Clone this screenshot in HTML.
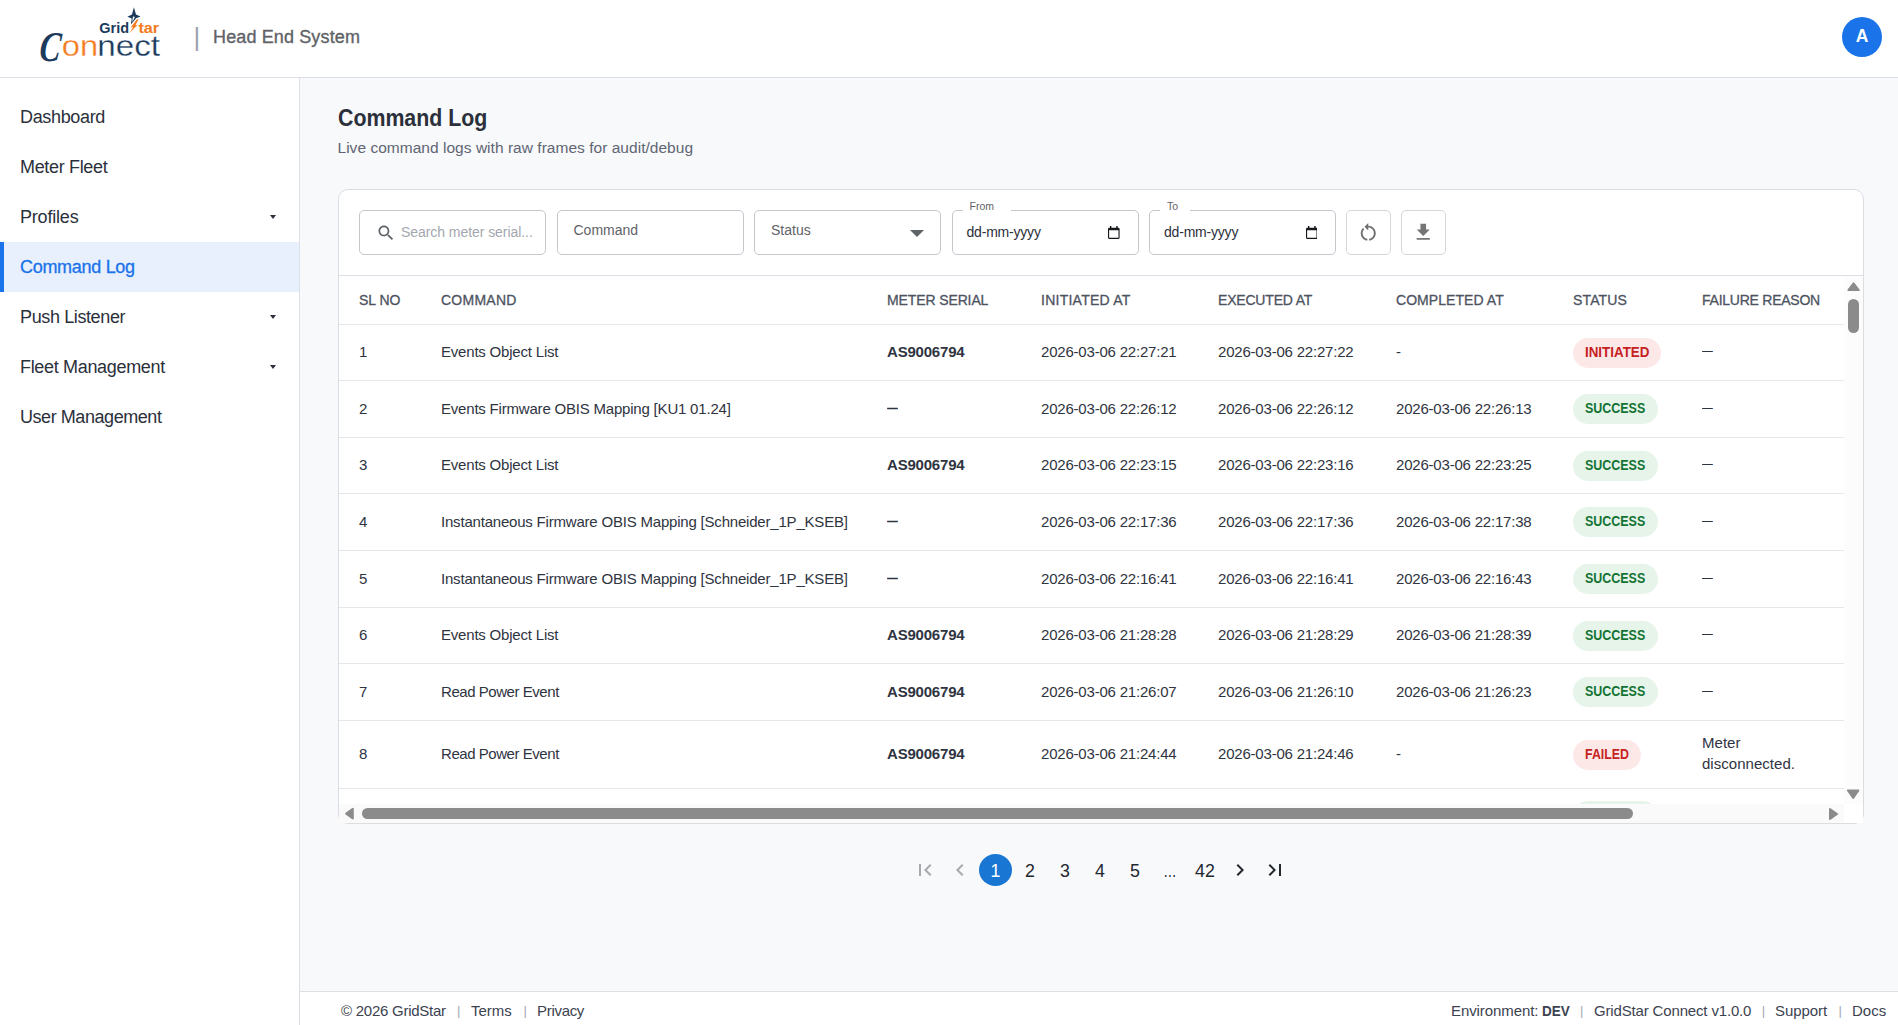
<!DOCTYPE html>
<html lang="en">
<head>
<meta charset="utf-8">
<title>Command Log - GridStar Connect</title>
<style>
*{box-sizing:border-box;margin:0;padding:0}
html,body{width:1898px;height:1025px;overflow:hidden;background:#f8f9fb;font-family:"Liberation Sans",sans-serif;color:#2f3441}
.abs{position:absolute}
#hdr{position:absolute;left:0;top:0;width:1898px;height:78px;background:#fff;border-bottom:1px solid #dcdfe5}
#side{position:absolute;left:0;top:78px;width:300px;height:947px;background:#fff;border-right:1px solid #dcdfe5}
.nav{position:absolute;left:0;width:299px;height:50px;line-height:50px;padding-left:20px;font-size:18px;color:#2b303b;letter-spacing:-0.15px}
.nav.act{background:#e8f0fe;color:#1a73e8;-webkit-text-stroke:0.3px #1a73e8;border-left:4px solid #1a73e8;padding-left:16px}
.nav i{position:absolute;left:269.600px;top:22.800px;width:0;height:0;border-left:3.200px solid transparent;border-right:3.200px solid transparent;border-top:4.400px solid #2b303b}
.nav.act i{left:266px}
#ttl{left:338px;top:103px;font-size:23px;font-weight:700;transform-origin:0 50%;transform:scaleX(0.9275);color:#2b303b;line-height:30px;white-space:nowrap}
#sub{left:337.500px;top:137.500px;font-size:15.5px;letter-spacing:0.03px;color:#5f6573;line-height:20px;white-space:nowrap}
#card{left:338px;top:189px;width:1526px;height:635px;background:#fff;border:1px solid #dadde2;border-radius:10px}
.fld{position:absolute;top:20px;height:45px;border:1px solid #c4c7cc;border-radius:5px;background:#fff;font-size:14px;color:#5f6573}
#ftr{left:300px;top:991px;width:1598px;height:34px;background:#fff;border-top:1px solid #dcdfe5;font-size:15px;color:#3c4250}

#hsep{left:193.4px;top:22px;font-size:25.8px;line-height:30px;color:#9aa0ae}
#hes{left:213px;top:24px;font-size:18px;letter-spacing:0.13px;line-height:26px;color:#5f6368;-webkit-text-stroke:0.35px #5f6368;white-space:nowrap}
#ava{left:1842px;top:17px;width:40px;height:40px;border-radius:50%;background:#1a73e8;color:#fff;font-weight:700;font-size:17.5px;line-height:39px;text-align:center}

.ph{position:absolute;top:0;line-height:43px;color:#a3a7ae;font-size:14px;letter-spacing:-0.06px;white-space:nowrap}
.lb{position:absolute;top:0;line-height:38px;color:#5f6368;font-size:14px;white-space:nowrap}
.dt{position:absolute;top:0;line-height:43px;color:#2b303b;font-size:14px;letter-spacing:-0.2px;white-space:nowrap}
.sl{position:absolute;top:-11px;line-height:12px;color:#5f6368;font-size:10.5px;white-space:nowrap}
.notch{position:absolute;top:-1px;height:1px;background:#fff}
.dd{position:absolute;left:155.200px;top:18.800px;width:0;height:0;border-left:7.100px solid transparent;border-right:7.100px solid transparent;border-top:7.100px solid #5f6368}
.fld.btn{border-color:#d3d6db}
#fdiv{position:absolute;left:0;top:85px;width:1524px;height:1px;background:#dcdfe5}
#tbl{position:absolute;left:0;top:0;width:1505px;height:614px;overflow:hidden}
.row{position:absolute;left:0;width:1505px;border-bottom:1px solid #e5e7eb;font-size:15px;color:#2f3441;letter-spacing:-0.2px}
.row.th{font-size:14px;color:#4d5361;-webkit-text-stroke:0.3px #4d5361;letter-spacing:0.1px}
.c{position:absolute;top:0;bottom:0;display:flex;align-items:center;white-space:nowrap;line-height:21px;padding-bottom:2px}
.th .c{padding-bottom:0}
.c7{padding-bottom:0}
.c1{left:20px}.c2{left:102px}.c3{left:548px}.c4{left:702px}.c5{left:879px}.c6{left:1057px}.c7{left:1234px}.c8{left:1363px}
.c.b{font-weight:700;font-size:15px}
.ds{text-decoration:none;display:inline-block;transform-origin:0 50%;transform:scaleX(0.72);position:relative;top:-1px}
.c8 .ds{top:-2px}
.pill u{text-decoration:none;display:inline-block;transform-origin:0 50%}
.pill{font-style:normal;display:inline-block;height:30px;line-height:29px;padding:0 0 0 11.8px;overflow:hidden;border-radius:15px;font-size:14px;font-weight:700;letter-spacing:0}
.pill.r{background:#fde8e8;color:#c5221f}
.pill.g{background:#e6f4ea;color:#137333}
#vsb{position:absolute;left:1505px;top:86px;width:19px;height:528px;background:#fcfcfc}
#hsb{position:absolute;left:0;top:614px;width:1505px;height:19px;background:#fafafa}
#scorner{position:absolute;left:1505px;top:614px;width:19px;height:19px;background:#fff}
.vth{position:absolute;left:4px;top:23px;width:11px;height:34px;border-radius:6px;background:#8b8b8b}
.hth{position:absolute;left:23px;top:4px;width:1271px;height:11px;border-radius:6px;background:#8b8b8b}
#pag{left:0;top:854px;width:1898px;height:32px}
.pg{position:absolute;top:0;width:32px;height:32px;line-height:34px;text-align:center;font-size:17.8px;color:#23272e;border-radius:50%}
.pg svg{position:absolute;left:4px;top:4px}
.pg.cur{background:#1976d2;color:#fff}
.ft{position:absolute;top:0;line-height:38px;white-space:nowrap}
.fs{position:absolute;top:0;line-height:37px;font-size:13px;color:#a4a8b4;width:4px;text-align:center;margin-left:-2px}
</style>
</head>
<body>
<div id="hdr">
<svg class="abs" style="left:30px;top:0" width="150" height="77" viewBox="30 0 150 77">
<path d="M133.900 7.300 L136 14.500 L140.500 16.600 L136.100 18.300 L130.900 24.500 L131.700 18.500 L127.400 16.700 L132 14.600 Z" fill="#1b3a5c"/>
<path d="M133.700 16 L134.800 17.500 L132.200 22 L132.800 17.600 Z" fill="#fff"/>
<path d="M137 19.200 L138.700 19.300 L135.400 25.300 L137.700 24.800 L129.500 33.100 L133.200 27.100 L130.600 27.600 Z" fill="#f47b20"/>
<text x="99.300" y="32.700" font-family="Liberation Sans, sans-serif" font-weight="700" font-size="14" fill="#1b3a5c" textLength="29.800" lengthAdjust="spacingAndGlyphs">Grid</text>
<text x="138.400" y="32.700" font-family="Liberation Sans, sans-serif" font-weight="700" font-size="14" fill="#f47b20" textLength="20.800" lengthAdjust="spacingAndGlyphs">tar</text>
<text x="38.500" y="61" font-family="Liberation Serif, serif" font-style="italic" font-weight="700" font-size="42.5" fill="#1b3a5c" textLength="21" lengthAdjust="spacingAndGlyphs" transform="translate(6.5 0) skewX(-6)">C</text>
<text x="61.800" y="56.400" font-family="Liberation Sans, sans-serif" font-size="30.4" fill="#f47b20" stroke="#fff" stroke-width="0.28" paint-order="fill stroke" textLength="36.400" lengthAdjust="spacingAndGlyphs">on</text>
<text x="97.300" y="56.400" font-family="Liberation Sans, sans-serif" font-size="30.4" fill="#1b3a5c" stroke="#fff" stroke-width="0.28" paint-order="fill stroke" textLength="62.700" lengthAdjust="spacingAndGlyphs">nect</text>
</svg>
<div class="abs" id="hsep">|</div>
<div class="abs" id="hes">Head End System</div>
<div class="abs" id="ava">A</div>
</div>
<div id="side">
<div class="nav" style="top:14px;letter-spacing:-0.34px">Dashboard</div>
<div class="nav" style="top:64px;letter-spacing:-0.33px">Meter Fleet</div>
<div class="nav" style="top:114px;letter-spacing:-0.19px">Profiles<i></i></div>
<div class="nav act" style="top:164px;letter-spacing:-0.3px">Command Log</div>
<div class="nav" style="top:214px;letter-spacing:-0.38px">Push Listener<i></i></div>
<div class="nav" style="top:264px;letter-spacing:-0.325px">Fleet Management<i></i></div>
<div class="nav" style="top:314px;letter-spacing:-0.44px">User Management</div>
</div>
<div id="ttl" class="abs">Command Log</div>
<div id="sub" class="abs">Live command logs with raw frames for audit/debug</div>
<div id="card" class="abs">
<div class="fld" style="left:20px;width:187px"><svg class="abs" style="left:16px;top:11.700px" width="20" height="20" viewBox="0 0 24 24"><path fill="#5f6368" d="M15.5 14h-.79l-.28-.27C15.41 12.59 16 11.11 16 9.5 16 5.91 13.09 3 9.5 3S3 5.91 3 9.5 5.91 16 9.5 16c1.610 0 3.090-.59 4.230-1.570l.27.28v.79l5 4.990L20.490 19l-4.990-5zm-6 0C7.010 14 5 11.990 5 9.500S7.010 5 9.500 5 14 7.010 14 9.500 11.990 14 9.500 14z"/></svg><span class="ph" style="left:41px">Search meter serial...</span></div>
<div class="fld" style="left:217.500px;width:187px"><span class="lb" style="left:16px">Command</span></div>
<div class="fld" style="left:415px;width:187px"><span class="lb" style="left:16px">Status</span><i class="dd"></i></div>
<div class="fld" style="left:612.500px;width:187px"><b class="notch" style="left:10px;width:48px"></b><span class="sl" style="left:17px">From</span><span class="dt" style="left:14px">dd-mm-yyyy</span><svg class="abs cal" style="left:155.600px;top:14.600px" width="11.6" height="13" viewBox="0 0 12 13.4"><path fill="#16181c" fill-rule="evenodd" d="M2 0h1.500v1.800h5V0H10v1.800h.800A1.200 1.200 0 0 1 12 3v9.200a1.200 1.200 0 0 1-1.200 1.200H1.200A1.200 1.200 0 0 1 0 12.200V3a1.200 1.200 0 0 1 1.200-1.200H2zM1.150 4.300v7.950h9.700V4.300z"/></svg></div>
<div class="fld" style="left:810px;width:187px"><b class="notch" style="left:10px;width:30px"></b><span class="sl" style="left:17px">To</span><span class="dt" style="left:14px">dd-mm-yyyy</span><svg class="abs cal" style="left:155.600px;top:14.600px" width="11.6" height="13" viewBox="0 0 12 13.4"><path fill="#16181c" fill-rule="evenodd" d="M2 0h1.500v1.800h5V0H10v1.800h.800A1.200 1.200 0 0 1 12 3v9.200a1.200 1.200 0 0 1-1.200 1.200H1.200A1.200 1.200 0 0 1 0 12.200V3a1.200 1.200 0 0 1 1.200-1.200H2zM1.150 4.300v7.950h9.700V4.300z"/></svg></div>
<div class="fld btn" style="left:1007px;width:45px"><svg class="abs" style="left:10.400px;top:10.200px" width="22.5" height="22.5" viewBox="0 0 24 24"><path fill="#6f6f6f" d="M12 5V2L8 6l4 4V7c3.310 0 6 2.690 6 6 0 2.970-2.170 5.430-5 5.910v2.020c3.950-.490 7-3.850 7-7.930 0-4.420-3.580-8-8-8zm-6 8c0-1.650.670-3.150 1.760-4.240L6.340 7.340C4.900 8.790 4 10.790 4 13c0 4.080 3.050 7.440 7 7.930v-2.020c-2.830-.480-5-2.940-5-5.910z"/></svg></div>
<div class="fld btn" style="left:1062px;width:45px"><svg class="abs" style="left:10.200px;top:10.200px" width="22.5" height="22.5" viewBox="0 0 24 24"><path fill="#757575" d="M5 20h14v-2H5v2zM19 9h-4V3H9v6H5l7 7 7-7z"/></svg></div>
<div id="fdiv"></div>
<div id="tbl">
<div class="row th" style="top:86px;height:49px"><span class="c c1" style="letter-spacing:-0.02px">SL NO</span><span class="c c2" style="letter-spacing:0.243px">COMMAND</span><span class="c c3" style="letter-spacing:-0.117px">METER SERIAL</span><span class="c c4" style="letter-spacing:0.25px">INITIATED AT</span><span class="c c5" style="letter-spacing:-0.191px">EXECUTED AT</span><span class="c c6" style="letter-spacing:0.058px">COMPLETED AT</span><span class="c c7" style="letter-spacing:0.15px">STATUS</span><span class="c c8" style="letter-spacing:-0.243px">FAILURE REASON</span></div>
<div class="row" style="top:135px;height:56px"><span class="c c1">1</span><span class="c c2">Events Object List</span><span class="c c3 b">AS9006794</span><span class="c c4">2026-03-06 22:27:21</span><span class="c c5">2026-03-06 22:27:22</span><span class="c c6">-</span><span class="c c7"><em class="pill r" style="width:88px"><u style="transform:scaleX(0.955)">INITIATED</u></em></span><span class="c c8"><u class="ds">—</u></span></div>
<div class="row" style="top:191px;height:57px"><span class="c c1">2</span><span class="c c2">Events Firmware OBIS Mapping [KU1 01.24]</span><span class="c c3 b"><u class="ds">—</u></span><span class="c c4">2026-03-06 22:26:12</span><span class="c c5">2026-03-06 22:26:12</span><span class="c c6">2026-03-06 22:26:13</span><span class="c c7"><em class="pill g" style="width:85px"><u style="transform:scaleX(0.89)">SUCCESS</u></em></span><span class="c c8"><u class="ds">—</u></span></div>
<div class="row" style="top:248px;height:56px"><span class="c c1">3</span><span class="c c2">Events Object List</span><span class="c c3 b">AS9006794</span><span class="c c4">2026-03-06 22:23:15</span><span class="c c5">2026-03-06 22:23:16</span><span class="c c6">2026-03-06 22:23:25</span><span class="c c7"><em class="pill g" style="width:85px"><u style="transform:scaleX(0.89)">SUCCESS</u></em></span><span class="c c8"><u class="ds">—</u></span></div>
<div class="row" style="top:304px;height:57px"><span class="c c1">4</span><span class="c c2">Instantaneous Firmware OBIS Mapping [Schneider_1P_KSEB]</span><span class="c c3 b"><u class="ds">—</u></span><span class="c c4">2026-03-06 22:17:36</span><span class="c c5">2026-03-06 22:17:36</span><span class="c c6">2026-03-06 22:17:38</span><span class="c c7"><em class="pill g" style="width:85px"><u style="transform:scaleX(0.89)">SUCCESS</u></em></span><span class="c c8"><u class="ds">—</u></span></div>
<div class="row" style="top:361px;height:57px"><span class="c c1">5</span><span class="c c2">Instantaneous Firmware OBIS Mapping [Schneider_1P_KSEB]</span><span class="c c3 b"><u class="ds">—</u></span><span class="c c4">2026-03-06 22:16:41</span><span class="c c5">2026-03-06 22:16:41</span><span class="c c6">2026-03-06 22:16:43</span><span class="c c7"><em class="pill g" style="width:85px"><u style="transform:scaleX(0.89)">SUCCESS</u></em></span><span class="c c8"><u class="ds">—</u></span></div>
<div class="row" style="top:418px;height:56px"><span class="c c1">6</span><span class="c c2">Events Object List</span><span class="c c3 b">AS9006794</span><span class="c c4">2026-03-06 21:28:28</span><span class="c c5">2026-03-06 21:28:29</span><span class="c c6">2026-03-06 21:28:39</span><span class="c c7"><em class="pill g" style="width:85px"><u style="transform:scaleX(0.89)">SUCCESS</u></em></span><span class="c c8"><u class="ds">—</u></span></div>
<div class="row" style="top:474px;height:57px"><span class="c c1">7</span><span class="c c2" style="letter-spacing:-0.45px">Read Power Event</span><span class="c c3 b">AS9006794</span><span class="c c4">2026-03-06 21:26:07</span><span class="c c5">2026-03-06 21:26:10</span><span class="c c6">2026-03-06 21:26:23</span><span class="c c7"><em class="pill g" style="width:85px"><u style="transform:scaleX(0.89)">SUCCESS</u></em></span><span class="c c8"><u class="ds">—</u></span></div>
<div class="row" style="top:531px;height:68px"><span class="c c1">8</span><span class="c c2" style="letter-spacing:-0.45px">Read Power Event</span><span class="c c3 b">AS9006794</span><span class="c c4">2026-03-06 21:24:44</span><span class="c c5">2026-03-06 21:24:46</span><span class="c c6">-</span><span class="c c7"><em class="pill r" style="width:68px"><u style="transform:scaleX(0.884)">FAILED</u></em></span><span class="c c8" style="letter-spacing:0.03px;padding-bottom:4px">Meter<br>disconnected.</span></div>
<div class="row" style="top:599px;height:53px;border:0"><span class="c c7"><em class="pill g" style="width:85px"><u style="transform:scaleX(0.89)">SUCCESS</u></em></span></div>
</div>
<div id="vsb"><i class="vth"></i><svg class="abs" style="left:0;top:0" width="19" height="528" viewBox="0 0 19 528"><path d="M9.550 7.300L14.700 14.100L4.400 14.100ZM4 514.400L14.400 514.400L9.200 522Z" fill="#8b8b8b" stroke="#8b8b8b" stroke-width="2" stroke-linejoin="round"/></svg></div>
<div id="hsb"><i class="hth"></i><svg class="abs" style="left:0;top:0" width="1505" height="19" viewBox="0 0 1505 19"><path d="M13.800 4.800L13.800 14.500L7.200 9.650ZM1491 5L1491 15L1498 10Z" fill="#8b8b8b" stroke="#8b8b8b" stroke-width="2" stroke-linejoin="round"/></svg></div>
<div id="scorner"></div>
</div>
<div id="pag" class="abs">
<span class="pg dis" style="left:909px"><svg width="24" height="24" viewBox="0 0 24 24"><path fill="#a6a9ae" d="M18.410 16.590L13.820 12l4.590-4.590L17 6l-6 6 6 6zM6 6h2v12H6z"/></svg></span>
<span class="pg dis" style="left:944px"><svg width="24" height="24" viewBox="0 0 24 24"><path fill="#a6a9ae" d="M15.410 7.410L14 6l-6 6 6 6 1.410-1.410L10.830 12z"/></svg></span>
<span class="pg cur" style="left:979px;width:33px">1</span>
<span class="pg" style="left:1014px">2</span>
<span class="pg" style="left:1049px">3</span>
<span class="pg" style="left:1084px">4</span>
<span class="pg" style="left:1119px">5</span>
<span class="pg" style="left:1154px"><u style="text-decoration:none;display:inline-block;transform:scaleX(0.75)">…</u></span>
<span class="pg" style="left:1189px">42</span>
<span class="pg" style="left:1224px"><svg width="24" height="24" viewBox="0 0 24 24"><path fill="#23272e" d="M10 6L8.590 7.410 13.170 12l-4.580 4.590L10 18l6-6z"/></svg></span>
<span class="pg" style="left:1259px"><svg width="24" height="24" viewBox="0 0 24 24"><path fill="#23272e" d="M5.590 7.410L10.180 12l-4.590 4.590L7 18l6-6-6-6zM16 6h2v12h-2z"/></svg></span>
</div>
<div id="ftr" class="abs">
<span class="ft" id="f1" style="left:41px;letter-spacing:-0.253px">© 2026 GridStar</span><span class="fs" style="left:158.800px">|</span>
<span class="ft" id="f2" style="left:171px">Terms</span><span class="fs" style="left:225.200px">|</span>
<span class="ft" id="f3" style="left:237px;letter-spacing:-0.3px">Privacy</span>
<span class="ft" id="f4" style="left:1151px;letter-spacing:-0.09px">Environment:</span><span class="ft" id="f5" style="left:1242px;font-weight:700;transform-origin:0 50%;transform:scaleX(0.9)">DEV</span><span class="fs" style="left:1281.600px">|</span>
<span class="ft" id="f6" style="left:1294px;letter-spacing:-0.157px">GridStar Connect v1.0.0</span><span class="fs" style="left:1463.400px">|</span>
<span class="ft" id="f7" style="left:1475px;letter-spacing:-0.05px">Support</span><span class="fs" style="left:1540.300px">|</span>
<span class="ft" id="f8" style="left:1552px">Docs</span>
</div>
</body>
</html>
